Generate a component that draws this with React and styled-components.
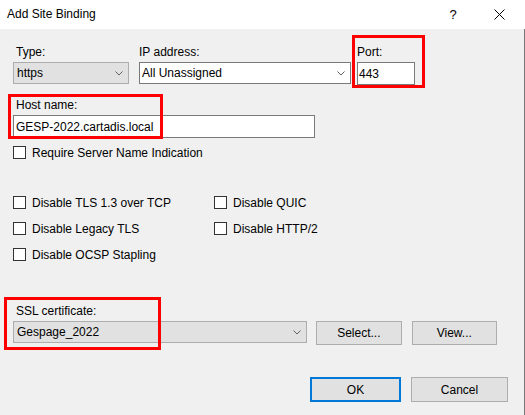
import React from 'react';
import styled, { createGlobalStyle } from 'styled-components';

const GlobalStyle = createGlobalStyle`
  body {
    margin: 0;
    font-family: "Liberation Sans", Arial, sans-serif;
    font-size: 12px;
    color: #000;
  }
`;

const Window = styled.div`
  width: 525px;
  height: 415px;
  display: flex;
  flex-direction: column;
  background: #f0f0f0;
  overflow: hidden;
`;

const TitleBar = styled.div`
  height: 29px;
  flex-shrink: 0;
  display: flex;
  align-items: center;
  background: #fff;
  padding: 0 3px 0 7px;
`;

const Title = styled.div`
  flex: 1;
  font-size: 12px;
  margin-top: -2px;
`;

const TitleButton = styled.div`
  width: 46px;
  height: 29px;
  display: flex;
  align-items: center;
  justify-content: center;
  font-size: 13px;
`;

const Body = styled.div`
  flex: 1;
  display: flex;
  flex-direction: column;
  padding: 15px 16px 0 13px;
  border-right: 1px solid #777;
`;

const FieldRow = styled.div`
  display: flex;
  gap: ${p => p.gap || 10}px;
`;

const Field = styled.div`
  position: relative;
  display: flex;
  flex-direction: column;
  width: ${p => p.width}px;
  margin-top: ${p => p.top || 0}px;
  margin-left: ${p => p.shift || 0}px;
`;

const Label = styled.div`
  line-height: 16px;
  height: 16px;
  margin-bottom: 2px;
  padding-left: ${p => p.indent ?? 3}px;
  white-space: nowrap;
`;

const Combo = styled.div`
  box-sizing: border-box;
  height: 22px;
  width: ${p => (p.width ? `${p.width}px` : '100%')};
  display: flex;
  align-items: center;
  justify-content: space-between;
  padding: 0 5px 0 ${p => p.pad || 3}px;
  background: ${p => (p.editable ? '#fff' : '#e1e1e1')};
  border: 1px solid ${p => (p.editable ? '#7a7a7a' : '#adadad')};
`;

const TextBox = styled.input`
  box-sizing: border-box;
  height: 23px;
  width: 100%;
  margin: 0;
  padding: 0 ${p => p.pad || 2}px;
  background: #fff;
  border: 1px solid #7a7a7a;
  font: inherit;
  color: #000;
  outline: none;
`;

const Highlight = styled.div`
  position: absolute;
  box-sizing: border-box;
  left: ${p => p.x}px;
  top: ${p => p.y}px;
  width: ${p => p.w}px;
  height: ${p => p.h}px;
  border: 3px solid #ff0000;
  pointer-events: none;
`;

const CheckRow = styled.label`
  display: flex;
  align-items: center;
  gap: 6px;
  height: 17px;
  margin-top: ${p => p.top || 0}px;
  white-space: nowrap;
`;

const Box = styled.span`
  box-sizing: border-box;
  width: 13px;
  height: 13px;
  flex-shrink: 0;
  background: #fff;
  border: 1px solid #333;
`;

const CheckGrid = styled.div`
  display: grid;
  grid-template-columns: 201px 1fr;
  row-gap: 9px;
  margin-top: 33px;
`;

const Button = styled.div`
  box-sizing: border-box;
  width: ${p => p.width}px;
  height: ${p => p.height || 24}px;
  display: flex;
  align-items: center;
  justify-content: center;
  background: #e1e1e1;
  border: ${p => (p.primary ? '2px solid #0078d7' : '1px solid #adadad')};
`;

const Footer = styled.div`
  display: flex;
  justify-content: flex-end;
  gap: 10px;
  margin-top: 32px;
`;

const Chevron = () => (
  <svg width="8" height="5" viewBox="0 0 8 5">
    <path d="M0.5 0.5 L4 4 L7.5 0.5" fill="none" stroke="#606060" strokeWidth="1" />
  </svg>
);

const CloseIcon = () => (
  <svg width="11" height="11" viewBox="0 0 11 11">
    <path d="M0.5 0.5 L10.5 10.5 M10.5 0.5 L0.5 10.5" stroke="#000" strokeWidth="1" />
  </svg>
);

const Check = ({ children, top }) => (
  <CheckRow top={top}>
    <Box />
    {children}
  </CheckRow>
);

export default function App() {
  return (
    <Window>
      <GlobalStyle />
      <TitleBar>
        <Title>Add Site Binding</Title>
        <TitleButton>?</TitleButton>
        <TitleButton>
          <CloseIcon />
        </TitleButton>
      </TitleBar>
      <Body>
        <FieldRow gap={10}>
          <Field width={116}>
            <Label>Type:</Label>
            <Combo>
              https
              <Chevron />
            </Combo>
          </Field>
          <Field width={212}>
            <Label indent={0}>IP address:</Label>
            <Combo editable pad={2}>
              All Unassigned
              <Chevron />
            </Combo>
          </Field>
          <Field width={58} shift={-4}>
            <Label indent={0}>Port:</Label>
            <TextBox readOnly value="443" pad={1} />
            <Highlight x={-5} y={-9} w={73} h={53} />
          </Field>
        </FieldRow>

        <Field width={302} top={12}>
          <Label>Host name:</Label>
          <TextBox readOnly value="GESP-2022.cartadis.local" />
          <Highlight x={-5} y={-3} w={155} h={45} />
        </Field>

        <Check top={6}>Require Server Name Indication</Check>

        <CheckGrid>
          <Check>Disable TLS 1.3 over TCP</Check>
          <Check>Disable QUIC</Check>
          <Check>Disable Legacy TLS</Check>
          <Check>Disable HTTP/2</Check>
          <Check>Disable OCSP Stapling</Check>
        </CheckGrid>

        <Field width={484} top={40}>
          <Label>SSL certificate:</Label>
          <FieldRow gap={9}>
            <Combo width={296}>
              Gespage_2022
              <Chevron />
            </Combo>
            <Button width={86}>Select...</Button>
            <Button width={86} style={{ marginLeft: 1 }}>View...</Button>
          </FieldRow>
          <Highlight x={-9} y={-6} w={157} h={53} />
        </Field>

        <Footer>
          <Button primary width={91} height={25}>OK</Button>
          <Button width={97} height={25}>Cancel</Button>
        </Footer>
      </Body>
    </Window>
  );
}
